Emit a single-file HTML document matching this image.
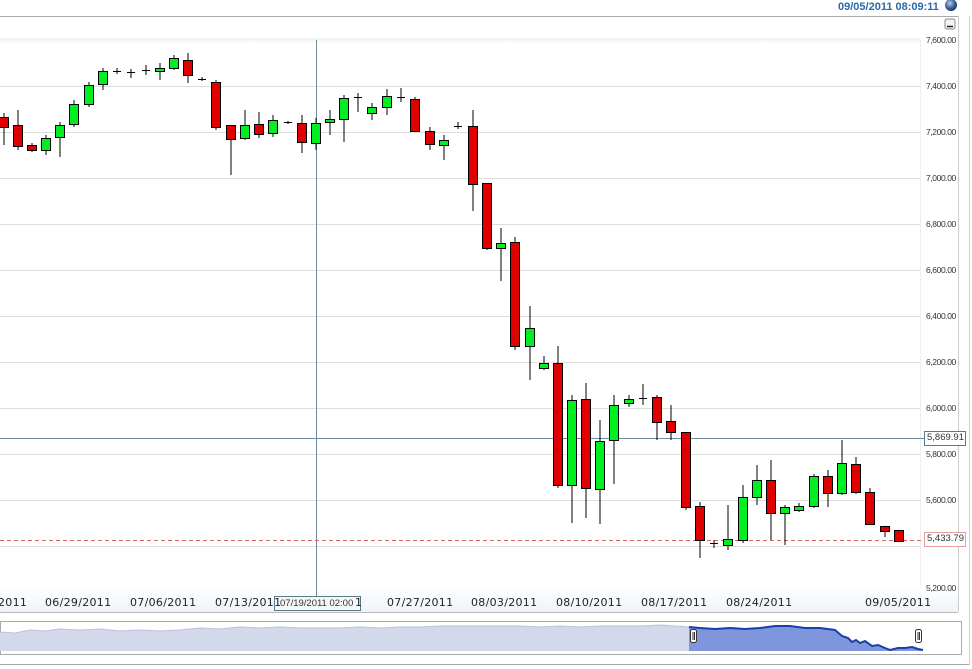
<!DOCTYPE html>
<html><head><style>
body{margin:0;width:972px;height:669px;overflow:hidden;background:#fff;font-family:"Liberation Sans",sans-serif;position:relative}
.t{position:absolute;white-space:nowrap}
.ax{font-family:"DejaVu Sans","Liberation Sans",sans-serif;font-size:11px;color:#222;top:596px;letter-spacing:0.3px}
.py{font-size:8.5px;color:#333;left:926px;letter-spacing:-0.4px}
</style></head><body>
<div class="t" style="left:838px;top:1px;font-size:11px;font-weight:bold;color:#2b6aa6">09/05/2011 08:09:11</div>
<svg width="972" height="669" style="position:absolute;left:0;top:0">
<defs><radialGradient id="g" cx="0.4" cy="0.35" r="0.7"><stop offset="0" stop-color="#b8cce8"/><stop offset="0.6" stop-color="#3a5f9a"/><stop offset="1" stop-color="#1a2f55"/></radialGradient>
<linearGradient id="ab" x1="0" y1="0" x2="0" y2="1"><stop offset="0" stop-color="#fff"/><stop offset="1" stop-color="#eef3f9"/></linearGradient>
<linearGradient id="tp" x1="0" y1="0" x2="0" y2="1"><stop offset="0" stop-color="#f2f2f2"/><stop offset="1" stop-color="#fff"/></linearGradient></defs>
<circle cx="951" cy="5" r="6" fill="url(#g)"/>
<line x1="0" y1="16.5" x2="958" y2="16.5" stroke="#aaa"/>
<line x1="958.5" y1="16" x2="958.5" y2="612" stroke="#ccc"/>
<rect x="0" y="38" width="920" height="6" fill="url(#tp)"/>
<line x1="920.5" y1="40" x2="920.5" y2="587" stroke="#eee"/>
<rect x="0" y="587" width="958" height="25" fill="url(#ab)"/>
<line x1="0" y1="612.5" x2="958" y2="612.5" stroke="#bbb"/>
<g stroke="#dedede">
<line x1="0" y1="86.5" x2="920" y2="86.5"/><line x1="0" y1="132.5" x2="920" y2="132.5"/><line x1="0" y1="178.5" x2="920" y2="178.5"/><line x1="0" y1="224.5" x2="920" y2="224.5"/><line x1="0" y1="270.5" x2="920" y2="270.5"/><line x1="0" y1="316.5" x2="920" y2="316.5"/><line x1="0" y1="362.5" x2="920" y2="362.5"/><line x1="0" y1="408.5" x2="920" y2="408.5"/><line x1="0" y1="454.5" x2="920" y2="454.5"/><line x1="0" y1="500.5" x2="920" y2="500.5"/><line x1="0" y1="546.5" x2="920" y2="546.5"/>
</g>
<rect x="945" y="19" width="10" height="10" rx="2" fill="#f4f4f4" stroke="#888"/><line x1="947" y1="26.5" x2="953" y2="26.5" stroke="#222" stroke-width="1.5"/>
<line x1="316.5" y1="40" x2="316.5" y2="596" stroke="#6f8c9c"/>
<line x1="0" y1="438.5" x2="924" y2="438.5" stroke="#6f8c9c"/>
<line x1="0" y1="540.5" x2="924" y2="540.5" stroke="#d66" stroke-dasharray="4,3"/>
<g stroke="#000" stroke-width="1">
<path d="M4 113V145M18 110V150M32 143V152M46 135V155M60 122V157M74 100V127M89 82V107M103 68V90M117 68V74M131 69V78M146 65V75M160 63V80M174 55V70M188 53V83M202 77V81M216 80V130M231 125V175M245 110V140M259 112V138M273 115V137M288 121V124M302 115V153M316 118V150M330 110V135M344 95V142M358 93V112M372 103V120M387 89V115M401 88V102M415 97V132M430 127V150M444 135V160M458 122V129M473 110V211M487 183V250M501 228V281M515 237V350M530 306V380M544 356V370M558 346V488M572 395V523M586 383V518M600 420V524M614 395V484M629 395V407M643 384V405M657 395V440M671 405V440M686 432V510M700 502V558M714 540V548M728 505V550M743 485V543M757 465V505M771 460V540M785 505V545M799 503V512M814 474V508M828 470V507M842 440V495M856 457V494M870 488V525M885 526V537M899 530V542"/>
<path d="M113 71.5H121M127 72.5H135M142 70.5H150M198 79.5H206M284 122.5H292M354 97.5H362M397 97.5H405M454 126.5H462M639 398.5H647M710 543.5H718"/>
</g>
<g stroke="#000" fill="#e00000">
<rect x="-0.5" y="117.5" width="9" height="10"/><rect x="13.5" y="125.5" width="9" height="21"/><rect x="27.5" y="145.5" width="9" height="5"/><rect x="183.5" y="60.5" width="9" height="15"/><rect x="211.5" y="82.5" width="9" height="45"/><rect x="226.5" y="125.5" width="9" height="14"/><rect x="254.5" y="124.5" width="9" height="10"/><rect x="297.5" y="123.5" width="9" height="19"/><rect x="410.5" y="99.5" width="9" height="32"/><rect x="425.5" y="131.5" width="9" height="13"/><rect x="468.5" y="126.5" width="9" height="58"/><rect x="482.5" y="183.5" width="9" height="65"/><rect x="510.5" y="242.5" width="9" height="104"/><rect x="553.5" y="363.5" width="9" height="122"/><rect x="581.5" y="399.5" width="9" height="89"/><rect x="652.5" y="397.5" width="9" height="25"/><rect x="666.5" y="421.5" width="9" height="11"/><rect x="681.5" y="432.5" width="9" height="75"/><rect x="695.5" y="506.5" width="9" height="34"/><rect x="766.5" y="480.5" width="9" height="33"/><rect x="823.5" y="476.5" width="9" height="17"/><rect x="851.5" y="464.5" width="9" height="28"/><rect x="865.5" y="492.5" width="9" height="32"/><rect x="880.5" y="526.5" width="9" height="5"/><rect x="894.5" y="530.5" width="9" height="11"/>
</g>
<g stroke="#000" fill="#00ee22">
<rect x="41.5" y="138.5" width="9" height="12"/><rect x="55.5" y="125.5" width="9" height="12"/><rect x="69.5" y="104.5" width="9" height="20"/><rect x="84.5" y="85.5" width="9" height="19"/><rect x="98.5" y="71.5" width="9" height="13"/><rect x="155.5" y="68.5" width="9" height="3"/><rect x="169.5" y="58.5" width="9" height="10"/><rect x="240.5" y="125.5" width="9" height="13"/><rect x="268.5" y="120.5" width="9" height="13"/><rect x="311.5" y="123.5" width="9" height="20"/><rect x="325.5" y="119.5" width="9" height="3"/><rect x="339.5" y="98.5" width="9" height="21"/><rect x="367.5" y="107.5" width="9" height="6"/><rect x="382.5" y="96.5" width="9" height="11"/><rect x="439.5" y="140.5" width="9" height="5"/><rect x="496.5" y="243.5" width="9" height="5"/><rect x="525.5" y="328.5" width="9" height="18"/><rect x="539.5" y="363.5" width="9" height="5"/><rect x="567.5" y="400.5" width="9" height="85"/><rect x="595.5" y="441.5" width="9" height="48"/><rect x="609.5" y="405.5" width="9" height="35"/><rect x="624.5" y="399.5" width="9" height="4"/><rect x="723.5" y="539.5" width="9" height="6"/><rect x="738.5" y="497.5" width="9" height="43"/><rect x="752.5" y="480.5" width="9" height="17"/><rect x="780.5" y="507.5" width="9" height="6"/><rect x="794.5" y="506.5" width="9" height="4"/><rect x="809.5" y="476.5" width="9" height="30"/><rect x="837.5" y="463.5" width="9" height="30"/>
</g>
<rect x="924.5" y="431.5" width="41" height="14" fill="#fff" stroke="#5a7a8a"/>
<rect x="924.5" y="532.5" width="41" height="14" fill="#fff" stroke="#e4a0a0"/>
<rect x="274.5" y="596.5" width="86" height="14" fill="#f4f6f8" stroke="#5a7a8a"/>
<rect x="0.5" y="621.5" width="961" height="33" fill="#fff" stroke="#aaa"/>
<path d="M0 632 L15 633 L30 630 L45 631 L60 629 L80 630 L100 629 L120 631 L140 630 L160 631 L180 630 L200 628 L220 629 L240 627 L260 628 L280 627 L300 628 L320 628 L340 628 L360 627 L380 628 L400 627 L420 627 L440 626 L460 626 L480 626 L500 626 L520 626 L540 627 L560 626 L580 627 L600 626 L620 626 L640 626 L660 625 L675 626 L689 627 L689 651 L0 651Z" fill="#d3d9eb"/>
<path d="M0 632 L15 633 L30 630 L45 631 L60 629 L80 630 L100 629 L120 631 L140 630 L160 631 L180 630 L200 628 L220 629 L240 627 L260 628 L280 627 L300 628 L320 628 L340 628 L360 627 L380 628 L400 627 L420 627 L440 626 L460 626 L480 626 L500 626 L520 626 L540 627 L560 626 L580 627 L600 626 L620 626 L640 626 L660 625 L675 626 L689 627" fill="none" stroke="#b8c2dc"/>
<path d="M689 627 L700 628 L715 629 L730 628 L745 629 L760 628 L775 626 L790 626 L805 628 L820 628 L835 630 L842 636 L848 638 L852 642 L856 640 L860 643 L865 641 L872 646 L878 645 L885 648 L890 650 L898 648 L905 648 L912 647 L918 649 L923 650 L923 651 L689 651Z" fill="#7f96dc"/>
<path d="M689 627 L700 628 L715 629 L730 628 L745 629 L760 628 L775 626 L790 626 L805 628 L820 628 L835 630 L842 636 L848 638 L852 642 L856 640 L860 643 L865 641 L872 646 L878 645 L885 648 L890 650 L898 648 L905 648 L912 647 L918 649 L923 650" fill="none" stroke="#1a3fa8" stroke-width="2"/>
<rect x="690.5" y="629.5" width="6" height="13" rx="2" fill="#fff" stroke="#333"/><path d="M693 632V640M694.5 632V640" stroke="#333"/>
<rect x="915.5" y="629.5" width="6" height="13" rx="2" fill="#fff" stroke="#333"/><path d="M918 632V640M919.5 632V640" stroke="#333"/>
<line x1="0" y1="664.5" x2="969" y2="664.5" stroke="#aaa"/>
<line x1="969.5" y1="16" x2="969.5" y2="665" stroke="#ccc"/>
</svg>
<div class="t py" style="top:35px">7,600.00</div>
<div class="t py" style="top:81px">7,400.00</div>
<div class="t py" style="top:127px">7,200.00</div>
<div class="t py" style="top:173px">7,000.00</div>
<div class="t py" style="top:219px">6,800.00</div>
<div class="t py" style="top:265px">6,600.00</div>
<div class="t py" style="top:311px">6,400.00</div>
<div class="t py" style="top:357px">6,200.00</div>
<div class="t py" style="top:403px">6,000.00</div>
<div class="t py" style="top:449px">5,800.00</div>
<div class="t py" style="top:495px">5,600.00</div>
<div class="t py" style="top:583px">5,200.00</div>
<div class="t" style="left:927px;top:432px;font-size:9.5px;color:#333">5,869.91</div>
<div class="t" style="left:927px;top:533px;font-size:9.5px;color:#333">5,433.79</div>
<div class="t ax" style="left:-2px">2011</div>
<div class="t ax" style="left:45px">06/29/2011</div>
<div class="t ax" style="left:130px">07/06/2011</div>
<div class="t ax" style="left:215px">07/13/2011</div>
<div class="t ax" style="left:355px">1</div>
<div class="t ax" style="left:387px">07/27/2011</div>
<div class="t ax" style="left:471px">08/03/2011</div>
<div class="t ax" style="left:556px">08/10/2011</div>
<div class="t ax" style="left:641px">08/17/2011</div>
<div class="t ax" style="left:726px">08/24/2011</div>
<div class="t ax" style="left:865px">09/05/2011</div>
<div class="t" style="left:280px;top:598px;font-size:9.5px;color:#333">07/19/2011 02:00</div>
</body></html>
